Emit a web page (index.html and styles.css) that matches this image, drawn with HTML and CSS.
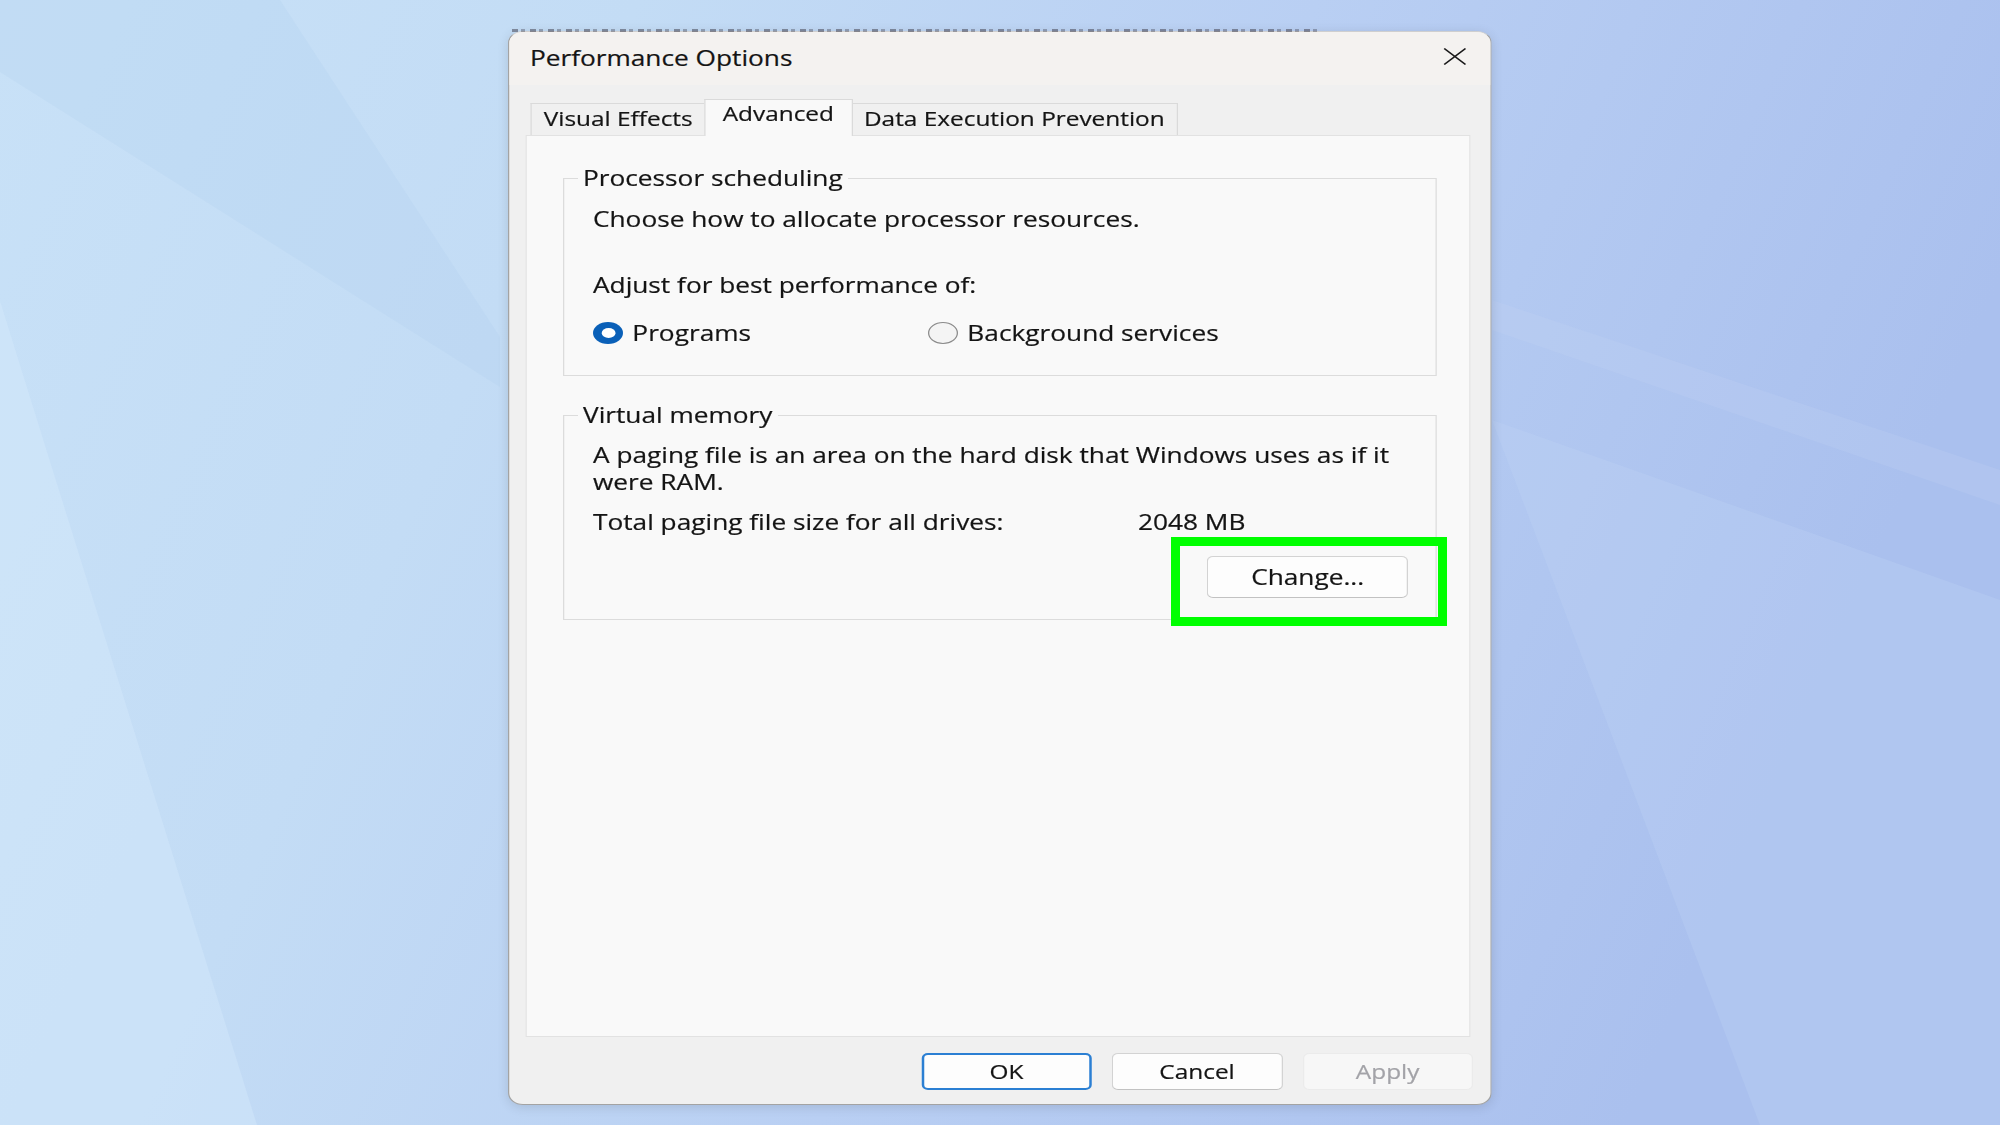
FILE: index.html
```html
<!DOCTYPE html>
<html lang="en">
<head>
  <meta charset="UTF-8">
  <title>Performance Options</title>
  <link rel="stylesheet" href="styles.css">
</head>
<body>

  <div class="desktop">
    <svg class="wallpaper" viewBox="0 0 2000 1125" preserveAspectRatio="none">
      <defs>
        <linearGradient id="sky" x1="0" y1="0" x2="1" y2="0.25">
          <stop offset="0" stop-color="#c8e1f7"/>
          <stop offset="0.3" stop-color="#c3dcf5"/>
          <stop offset="0.62" stop-color="#b9cff3"/>
          <stop offset="1" stop-color="#aac0ee"/>
        </linearGradient>
      </defs>
      <rect width="2000" height="1125" fill="url(#sky)"/>
      <polygon points="0,0 280,0 500,337 500,387 0,72" fill="#afcbec" opacity="0.22"/>
      <polygon points="0,301 0,1125 257,1125" fill="#d6ebfd" opacity="0.4"/>
      <polygon points="1492,420 2000,600 2000,1125 1760,1125" fill="#c0d4f5" opacity="0.3"/>
      <polygon points="1492,300 2000,470 2000,505 1492,330" fill="#c6d9f6" opacity="0.2"/>
    </svg>

    <div class="window">
      <div class="titlebar">
        <span class="title">Performance Options</span>
        <svg class="close" viewBox="0 0 19 17">
          <path d="M1 0.5 L18 16.5 M18 0.5 L1 16.5" stroke="#1a1a1a" stroke-width="1.4" fill="none"/>
        </svg>
      </div>

      <div class="tabs">
        <div class="tab">Visual Effects</div>
        <div class="tab active">Advanced</div>
        <div class="tab">Data Execution Prevention</div>
      </div>

      <div class="panel">
        <fieldset class="group">
          <legend>Processor scheduling</legend>
          <div class="group-body">
            <p class="line">Choose how to allocate processor resources.</p>
            <p class="line spaced">Adjust for best performance of:</p>
            <div class="options">
              <label class="option"><span class="radio checked"></span>Programs</label>
              <label class="option"><span class="radio"></span>Background services</label>
            </div>
          </div>
        </fieldset>

        <fieldset class="group">
          <legend>Virtual memory</legend>
          <div class="group-body">
            <p class="note">A paging file is an area on the hard disk that Windows uses as if it<br>were RAM.</p>
            <div class="size-row">
              <span>Total paging file size for all drives:</span>
              <span>2048 MB</span>
            </div>
            <div class="change-row">
              <button class="button change">Change...</button>
            </div>
          </div>
        </fieldset>
      </div>

      <div class="actions">
        <button class="button default">OK</button>
        <button class="button">Cancel</button>
        <button class="button" disabled>Apply</button>
      </div>
    </div>

    <div class="behind-text"></div>
    <div class="highlight"></div>
  </div>

</body>
</html>
```

FILE: styles.css
```css
* {
  box-sizing: border-box;
}

html, body {
  margin: 0;
  height: 100%;
}

body {
  font-family: "Open Sans", "Noto Sans", sans-serif;
  color: #141414;
  overflow: hidden;
}

.desktop {
  position: relative;
  width: 2000px;
  height: 1125px;
  overflow: hidden;
}

.wallpaper {
  position: absolute;
  left: 0;
  top: 0;
  width: 2000px;
  height: 1125px;
  display: block;
}

/* the screenshot is stretched sideways, so the window is too */
.window {
  position: absolute;
  left: 508px;
  top: 31px;
  width: 787px;
  height: 1074px;
  transform: scaleX(1.25);
  transform-origin: 0 0;
  display: flex;
  flex-direction: column;
  background: #f0f0f0;
  border: 1px solid #a3a3a3;
  border-top-color: #cfcfcf;
  border-radius: 12px;
  overflow: hidden;
  box-shadow: 0 2px 10px rgba(0, 0, 0, 0.12);
  -webkit-text-stroke: 0.2px currentColor;
}

.titlebar {
  flex: none;
  height: 53px;
  display: flex;
  justify-content: space-between;
  align-items: flex-start;
  padding: 0 19px 0 16.5px;
  background: #f4f2f0;
}

.title {
  margin-top: 11.6px;
  font-size: 21px;
  line-height: 28px;
}

.close {
  margin-top: 16px;
  width: 19px;
  height: 17px;
}

.tabs {
  flex: none;
  height: 50px;
  display: flex;
  align-items: flex-end;
  padding-left: 16.6px;
}

.tab {
  font-size: 19.5px;
  line-height: 26px;
  padding: 2px 10px 3px;
  border: 1px solid #dadada;
  border-bottom: none;
  background: #f0f0f0;
}

.tab.active {
  position: relative;
  z-index: 1;
  padding: 1px 14px 9px;
  margin: 0 -2px -1px;
  background: #f9f9f9;
}

.panel {
  flex: none;
  height: 902px;
  margin: 0 16.4px 0 13.4px;
  padding: 28px 25.4px 0 28.6px;
  background: #f9f9f9;
  border: 1px solid #e2e2e2;
}

.group {
  margin: 0;
  min-width: 0;
  padding: 0 22px 28px 11px;
  border: 1px solid #dcdcdc;
}

.group + .group {
  margin-top: 25px;
  padding-bottom: 21px;
}

.group legend {
  font-size: 21px;
  line-height: 28px;
  padding: 0 4px;
}

.group-body {
  padding: 13px 0 0 12px;
  font-size: 21px;
  line-height: 28px;
}

.line {
  margin: 0;
}

.line.spaced {
  margin-top: 38px;
}

.options {
  display: grid;
  grid-template-columns: 268px auto;
  margin-top: 20px;
}

.option {
  display: flex;
  align-items: center;
  gap: 7px;
}

.radio {
  flex: none;
  width: 24.5px;
  height: 22.4px;
  border-radius: 50%;
  border: 1.2px solid #8a8a8a;
  background: #f4f4f4;
}

.radio.checked {
  display: flex;
  align-items: center;
  justify-content: center;
  border: none;
  background: #0a60b8;
}

.radio.checked::after {
  content: "";
  width: 11px;
  height: 9.5px;
  border-radius: 50%;
  background: #fff;
}

.note {
  margin: 0;
  line-height: 26.5px;
}

.size-row {
  display: grid;
  grid-template-columns: 436px auto;
  margin-top: 13px;
}

.change-row {
  display: flex;
  justify-content: flex-end;
  margin-top: 20px;
}

.button {
  font-family: inherit;
  font-size: 21px;
  line-height: 28px;
  color: #141414;
  padding: 0;
  background: #fdfdfd;
  border: 1px solid #d3d3d3;
  border-bottom-color: #c2c2c2;
  border-radius: 5px;
}

.change {
  width: 161px;
  height: 42px;
}

.actions {
  flex: 1;
  display: flex;
  justify-content: flex-end;
  align-items: flex-start;
  gap: 16px;
  padding: 16px 14px 0 0;
}

.actions .button {
  width: 136.5px;
  height: 37px;
  font-size: 19.5px;
  line-height: 26px;
}

.actions .default {
  border: 2px solid #2b7fd3;
}

.actions .button:disabled {
  background: #f7f7f7;
  border-color: #ebebeb;
  color: #a3a3a8;
}

/* bits of a window behind, peeking over the top edge */
.behind-text {
  position: absolute;
  left: 512px;
  top: 29px;
  width: 808px;
  height: 3px;
  background: repeating-linear-gradient(90deg, rgba(70, 70, 85, 0.55) 0 6px, transparent 6px 9px, rgba(70, 70, 85, 0.4) 9px 13px, transparent 13px 18px);
}

.highlight {
  position: absolute;
  left: 1171px;
  top: 537px;
  width: 276px;
  height: 89px;
  border: 9px solid #00ff00;
}
```
